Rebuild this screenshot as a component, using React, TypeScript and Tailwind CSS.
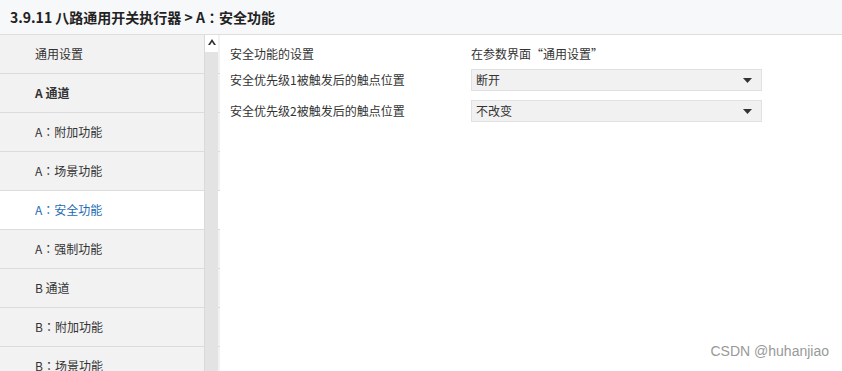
import React from "react";

const items = [
  { prefix: "", label: "通用设置" },
  { prefix: "", label: "A 通道", bold: true },
  { prefix: "A", label: "附加功能" },
  { prefix: "A", label: "场景功能" },
  { prefix: "A", label: "安全功能", active: true },
  { prefix: "A", label: "强制功能" },
  { prefix: "", label: "B 通道" },
  { prefix: "B", label: "附加功能" },
  { prefix: "B", label: "场景功能" },
];

// full-width colon, centred like the original UI font
function Colon() {
  return <span style={{ fontFamily: '"Noto Sans CJK TC", sans-serif' }}>：</span>;
}

function Select({ value }: { value: string }) {
  return (
    <div className="flex h-[22px] w-[291px] items-center justify-between border border-[#e1e1e1] bg-[#f1f1f1] pl-[4px] pr-[9px]">
      <span>{value}</span>
      <svg width="9" height="5" viewBox="0 0 9 5">
        <path d="M0 0h9L4.5 5z" fill="#333" />
      </svg>
    </div>
  );
}

export default function App() {
  return (
    <div
      className="relative h-[371px] w-[842px] overflow-hidden bg-white text-[12px] text-[#333]"
      style={{ fontFamily: '"Noto Sans CJK SC", "Noto Sans", sans-serif' }}
    >
      {/* header */}
      <div className="flex h-[35px] items-center border-b border-[#dedede] bg-[#f7f8f9] pl-[10px] text-[14px] font-bold text-[#222]">
        3.9.11 八路通用开关执行器 &gt; A<Colon />安全功能
      </div>

      <div className="flex">
        {/* sidebar */}
        <div className="relative w-[220px] shrink-0">
          {items.map((it) => (
            <div
              key={it.prefix + it.label}
              className={`flex h-[39px] items-center border-b border-[#dcdcdc] pl-[35px] ${
                it.active ? "bg-white text-[#1c6cb5]" : "bg-[#f2f2f2]"
              } ${it.bold ? "font-bold" : ""}`}
            >
              {it.prefix && (
                <>
                  {it.prefix}
                  <Colon />
                </>
              )}
              {it.label}
            </div>
          ))}
          <div className="absolute right-[2px] top-0 flex h-full w-[14px] flex-col border-l border-[#dadada] bg-[#e3e3e3]">
            <div className="flex h-[17px] items-start justify-center bg-white pt-[4px]">
              <svg width="8" height="6" viewBox="0 0 8 6">
                <path d="M0 6L4 0l4 6H6L4 3 2 6z" fill="#333" />
              </svg>
            </div>
          </div>
        </div>

        {/* content */}
        <div className="flex-1 pl-[10px] pt-[9px]">
          <div className="flex h-[19px] items-center">
            <div className="w-[241px]">安全功能的设置</div>
            <div>在参数界面“通用设置”</div>
          </div>
          <div className="mt-[6px] flex items-center">
            <div className="w-[241px]">安全优先级1被触发后的触点位置</div>
            <Select value="断开" />
          </div>
          <div className="mt-[9px] flex items-center">
            <div className="w-[241px]">安全优先级2被触发后的触点位置</div>
            <Select value="不改变" />
          </div>
        </div>
      </div>

      <div
        className="absolute bottom-[9px] right-[13px] text-[14px] text-[#999]"
        style={{ fontFamily: '"Liberation Sans", Arial, sans-serif' }}
      >
        CSDN @huhanjiao
      </div>
    </div>
  );
}
